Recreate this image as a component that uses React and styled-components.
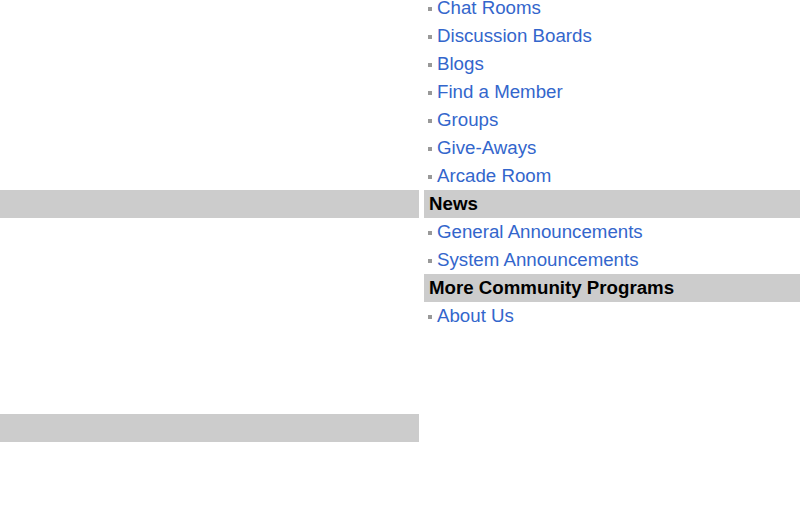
import React from "react";
import styled, { createGlobalStyle } from "styled-components";

const GlobalStyle = createGlobalStyle`
  html, body {
    margin: 0;
    padding: 0;
    background: #ffffff;
    font-family: "Liberation Sans", Arial, sans-serif;
    overflow: hidden;
  }
`;

const leftRows = [false, false, false, false, false, false, false, true, false, false, false, false, false, false, false, true];

const sections = [
  {
    links: ["Chat Rooms", "Discussion Boards", "Blogs", "Find a Member", "Groups", "Give-Aways", "Arcade Room"],
  },
  { title: "News", links: ["General Announcements", "System Announcements"] },
  { title: "More Community Programs", links: ["About Us"] },
];

const App = () => {
  return (
    <Page>
      <GlobalStyle />
      <LeftColumn>
        {leftRows.map((bar, i) => (
          <LeftRow key={i} bar={bar} />
        ))}
      </LeftColumn>

      <RightColumn>
        {sections.map((section, i) => (
          <React.Fragment key={i}>
            {section.title && <SectionTitle>{section.title}</SectionTitle>}
            {section.links.map((link) => (
              <LinkRow key={link}>
                <Bullet />
                <NavLink href="#">{link}</NavLink>
              </LinkRow>
            ))}
          </React.Fragment>
        ))}
      </RightColumn>
    </Page>
  );
};

const Page = styled.div`
  display: grid;
  grid-template-columns: 419px 1fr;
  column-gap: 5px;
  width: 800px;
  height: 510px;
  margin-top: -6px;
`;

const LeftColumn = styled.div`
  display: flex;
  flex-direction: column;
`;

const LeftRow = styled.div`
  height: 28px;
  background: ${(props) => (props.bar ? "#cccccc" : "transparent")};
`;

const RightColumn = styled.div`
  display: flex;
  flex-direction: column;
`;

const SectionTitle = styled.div`
  height: 28px;
  line-height: 28px;
  padding-left: 5px;
  background: #cccccc;
  color: #000000;
  font-weight: 700;
  font-size: 18.7px;
`;

const LinkRow = styled.div`
  height: 28px;
  display: flex;
  align-items: center;
  gap: 5px;
  padding-left: 4px;
`;

const Bullet = styled.span`
  width: 4px;
  height: 4px;
  background: #999999;
  flex: none;
  margin-top: 1px;
`;

const NavLink = styled.a`
  color: #3366cc;
  font-size: 18.7px;
  text-decoration: none;
`;

export default App;
